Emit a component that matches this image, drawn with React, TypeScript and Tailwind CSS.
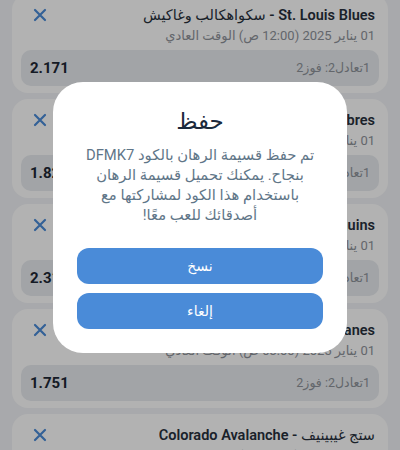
import React from "react";

type Part = { text: string; latin: boolean };

type Bet = {
  title: Part[];
  date: string;
  market: string;
  odds: string;
};

const en = (text: string): Part => ({ text, latin: true });
const ar = (text: string): Part => ({ text, latin: false });

const bets: Bet[] = [
  {
    title: [en("St. Louis Blues"), ar("سكواهكالب وغاكيش")],
    date: "01 يناير 2025 (12:00 ص) الوقت العادي",
    market: "1تعادل2: فوز2",
    odds: "2.171",
  },
  {
    title: [en("Buffalo Sabres"), ar("سكولب سوبمولوك")],
    date: "01 يناير 2025 (12:00 ص) الوقت العادي",
    market: "1تعادل2: فوز2",
    odds: "1.820",
  },
  {
    title: [en("Pittsburgh Penguins"), ar("زرديفاش وورا")],
    date: "01 يناير 2025 (12:00 ص) الوقت العادي",
    market: "1تعادل2: فوز2",
    odds: "2.310",
  },
  {
    title: [en("Carolina Hurricanes"), ar("سترابوت زارد")],
    date: "01 يناير 2025 (03:00 ص) الوقت العادي",
    market: "1تعادل2: فوز2",
    odds: "1.751",
  },
  {
    title: [ar("ستج غيبينيف"), en("Colorado Avalanche")],
    date: "01 يناير 2025 (03:00 ص) الوقت العادي",
    market: "1تعادل2: فوز2",
    odds: "1.640",
  },
];

function CloseIcon() {
  return (
    <svg width="14" height="14" viewBox="0 0 14 14" fill="none">
      <path
        d="M2 2 L12 12 M12 2 L2 12"
        stroke="#4a8bd8"
        strokeWidth="2.2"
        strokeLinecap="round"
      />
    </svg>
  );
}

function TitlePart({ part }: { part: Part }) {
  return part.latin ? (
    <span className="font-semibold">{part.text}</span>
  ) : (
    <span className="font-normal">{part.text}</span>
  );
}

function BetCard({ bet }: { bet: Bet }) {
  return (
    <div className="h-[99px] rounded-[16px] bg-white px-[9px] pt-[12px]">
      <div className="flex h-[20px] items-center justify-between pr-[4px] pl-[12px]">
        <div className="truncate text-[14.5px] text-[#27303c]">
          <TitlePart part={bet.title[0]} />
          <span className="font-semibold"> - </span>
          <TitlePart part={bet.title[1]} />
        </div>
        <div className="-mt-[3px] shrink-0">
          <CloseIcon />
        </div>
      </div>
      <div className="flex h-[20px] items-center pr-[4px] text-[13px] text-[#8e939a]">
        {bet.date}
      </div>
      <div className="mt-[4px] flex h-[36px] items-center justify-between rounded-[10px] bg-[#e8ebef] px-[9px]">
        <span className="text-[12.5px] text-[#8e939a]">{bet.market}</span>
        <span className="text-[15px] font-bold text-[#1e2835]">{bet.odds}</span>
      </div>
    </div>
  );
}

export default function App() {
  return (
    <div
      dir="rtl"
      className="relative h-[450px] w-[400px] overflow-hidden bg-[#f1f3f6]"
      style={{ fontFamily: "Roboto, 'DejaVu Sans', sans-serif" }}
    >
      <div className="-mt-[6px] flex flex-col gap-[6px] px-[12px]">
        {bets.map((b, i) => (
          <BetCard key={i} bet={b} />
        ))}
      </div>

      {/* dimmed backdrop */}
      <div className="absolute inset-0 bg-black/30" />

      {/* save dialog */}
      <div className="absolute left-[53px] top-[82px] w-[294px] rounded-[30px] bg-white px-[24px] pt-[25px] pb-[24px] text-center">
        <div className="text-[23px] leading-[30px] text-[#1b2a3c]">حفظ</div>
        <p className="mt-[8px] text-[14.8px] leading-[20px] text-[#5f7688]">
          تم حفظ قسيمة الرهان بالكود DFMK7
          <br />
          بنجاح. يمكنك تحميل قسيمة الرهان
          <br />
          باستخدام هذا الكود لمشاركتها مع
          <br />
          أصدقائك للعب معًا!
        </p>
        <div className="mt-[23px] flex flex-col gap-[9px]">
          <button className="h-[36px] rounded-[12px] bg-[#4a8bd8] text-[14px] text-white">
            نسخ
          </button>
          <button className="h-[36px] rounded-[12px] bg-[#4a8bd8] text-[14px] text-white">
            إلغاء
          </button>
        </div>
      </div>
    </div>
  );
}
